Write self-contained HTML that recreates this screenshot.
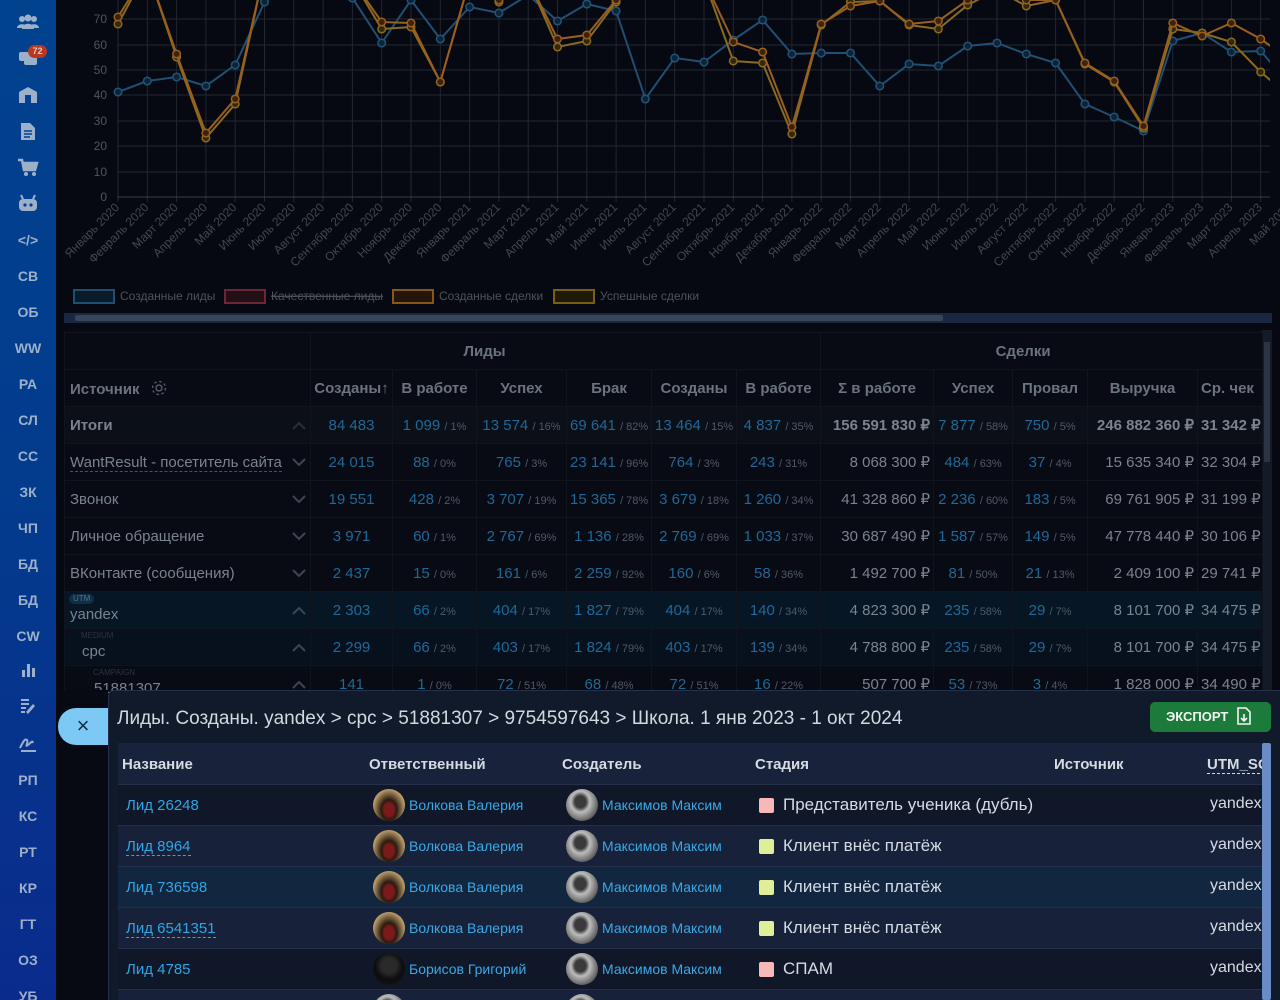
<!DOCTYPE html>
<html><head><meta charset="utf-8"><style>
*{box-sizing:border-box;margin:0;padding:0}
html,body{width:1280px;height:1000px;overflow:hidden}
body{background:#060912;font-family:"Liberation Sans","Noto Sans CJK SC",sans-serif;position:relative}
.sb{position:absolute;left:0;top:0;width:56px;height:1000px;background:linear-gradient(#01428f,#033b8d 50%,#0a2b8c)}
.sb div{position:absolute;left:0;width:56px;text-align:center;color:#9db0c9;font-weight:bold;font-size:14px;line-height:20px}
.badge{position:absolute;left:28px;top:45px;width:19px;height:13px;border-radius:7px;background:#b8391e;color:#e8c8c0;font-size:9px;font-weight:bold;text-align:center;line-height:13px}
table.m{position:absolute;left:64px;top:332px;border-collapse:collapse;table-layout:fixed;width:1198px;font-size:15px;color:#7a838e}
table.m td{height:37px;border:1px solid #10141c;text-align:center;white-space:nowrap;overflow:hidden;padding:0 3px}
.b{color:#1f6898}.p{font-size:11px;color:#4f5a66}
.r{text-align:right!important}
.hd td{color:#6a737e;font-weight:bold}
.tot td{background:#0b0f18}
.row td{background:#080b13}
.ya td{background:#061624}
.cp td{background:#07111d}
.chev{position:absolute;left:292px;width:14px;height:9px}
.clip{position:absolute;left:0;top:0;width:1280px;height:1000px;overflow:hidden}
.modal{position:absolute;left:108px;top:690px;width:1172px;height:310px;background:#111a2b;border-top:1px solid #263049;border-left:1px solid #263049;border-radius:6px 0 0 0}
.close{position:absolute;left:58px;top:708px;width:50px;height:37px;border-radius:18px 0 0 18px;background:#7cc9f6;color:#1c2c40;font-size:22px;text-align:center;line-height:36px}
.title{position:absolute;left:117px;top:708px;font-size:19px;color:#d2d8e0}
.exp{position:absolute;left:1150px;top:702px;width:121px;height:30px;border-radius:5px;background:#1c7a3a;color:#f2f6f2;font-weight:bold;font-size:13px;line-height:30px;padding-left:16px}
.it{position:absolute;left:118px;top:743px;width:1144px;height:257px;overflow:hidden}
.it .tr{position:relative;height:41px;border-bottom:1px solid #243049;font-size:15px}
.it .th{background:#18223a;height:42px;color:#d6dbe2;font-weight:bold}
.it span{position:absolute;top:12px;white-space:nowrap}
.lk{color:#2ea6e6;font-size:15px}
.dash{border-bottom:1px dashed #2ea6e6}
.nm{color:#3aa9e6;font-size:14px}
.av{position:absolute;top:4px;width:32px;height:32px;border-radius:50%}
.a1{background:radial-gradient(ellipse at 50% 65%,#7a1a1a 0 22%,#2a1a10 34%,#b89a68 70%)}
.a2{background:radial-gradient(ellipse at 45% 40%,#3a3a3a 0 22%,#bdbdbd 38%,#555 75%)}
.a3{background:radial-gradient(circle at 50% 40%,#2a2a2a 0 30%,#0d0d0d 55%,#161616)}
.sq{position:absolute;left:641px;top:13px;width:15px;height:15px;border-radius:2px}
.st{color:#d5dbe2;font-size:17px}
</style></head><body><div class="clip">
<div class="sb">
<div style="top:14px"><svg width="22" height="16" viewBox="0 0 22 16"><circle cx="5" cy="5" r="3" fill="#9db0c9"/><circle cx="11" cy="4" r="3.5" fill="#9db0c9"/><circle cx="17" cy="5" r="3" fill="#9db0c9"/><path d="M0 14c0-5 10-5 10 0zM5 15c0-7 12-7 12 0zM12 14c0-5 10-5 10 0z" fill="#9db0c9"/></svg></div>
<div style="top:50px"><svg width="20" height="18" viewBox="0 0 20 18"><rect x="1" y="2" width="13" height="9" rx="2" fill="#9db0c9"/><rect x="6" y="6" width="13" height="9" rx="2" fill="#9db0c9"/></svg></div>
<span class="badge">72</span>
<div style="top:86px"><svg width="20" height="18" viewBox="0 0 20 18"><path d="M1 6L10 1L19 6V17H1Z" fill="#9db0c9"/><rect x="7" y="9" width="6" height="8" fill="#03408e"/></svg></div>
<div style="top:122px"><svg width="16" height="19" viewBox="0 0 16 19"><path d="M1 1H10L15 6V18H1Z" fill="#9db0c9"/><path d="M4 9H12M4 12H12M4 15H10" stroke="#03408e" stroke-width="1.5"/></svg></div>
<div style="top:158px"><svg width="22" height="20" viewBox="0 0 22 20"><path d="M1 2H5L7 12H18L20 5H6" fill="none" stroke="#9db0c9" stroke-width="2.5"/><rect x="7" y="5" width="12" height="6" fill="#9db0c9"/><circle cx="9" cy="16" r="2" fill="#9db0c9"/><circle cx="17" cy="16" r="2" fill="#9db0c9"/></svg></div>
<div style="top:194px"><svg width="20" height="18" viewBox="0 0 20 18"><rect x="1" y="5" width="18" height="12" rx="4" fill="#9db0c9"/><circle cx="7" cy="11" r="1.6" fill="#03408e"/><circle cx="13" cy="11" r="1.6" fill="#03408e"/><path d="M5 5L3 1M15 5L17 1" stroke="#9db0c9" stroke-width="2"/></svg></div>
<div style="top:230px">&lt;/&gt;</div>
<div style="top:266px">СВ</div><div style="top:302px">ОБ</div><div style="top:338px">WW</div><div style="top:374px">РА</div><div style="top:410px">СЛ</div><div style="top:446px">СС</div><div style="top:482px">ЗК</div><div style="top:518px">ЧП</div><div style="top:554px">БД</div><div style="top:590px">БД</div><div style="top:626px">CW</div>
<div style="top:662px"><svg width="16" height="16" viewBox="0 0 16 16"><rect x="2" y="8" width="3" height="7" fill="#9db0c9"/><rect x="7" y="2" width="3" height="13" fill="#9db0c9"/><rect x="12" y="6" width="3" height="9" fill="#9db0c9"/></svg></div>
<div style="top:698px"><svg width="18" height="18" viewBox="0 0 18 18"><path d="M2 2H10M2 6H10M2 10H7M2 14H6" stroke="#9db0c9" stroke-width="2"/><path d="M9 16L16 8L14 6L7 14Z" fill="#9db0c9"/></svg></div>
<div style="top:734px"><svg width="18" height="18" viewBox="0 0 18 18"><path d="M1 14C4 8 6 4 8 6S5 14 9 11S13 6 14 9M2 17H17" stroke="#9db0c9" stroke-width="2" fill="none"/></svg></div>
<div style="top:770px">РП</div><div style="top:806px">КС</div><div style="top:842px">РТ</div><div style="top:878px">КР</div><div style="top:914px">ГТ</div><div style="top:950px">ОЗ</div><div style="top:986px">УБ</div>
</div>

<svg style="position:absolute;left:56px;top:0" width="1224" height="330" viewBox="56 0 1224 330">
<defs>
<marker id="mb" markerWidth="10" markerHeight="10" refX="5" refY="5" markerUnits="userSpaceOnUse"><circle cx="5" cy="5" r="3.8" fill="#0e2436" stroke="#1f5478" stroke-width="1.5"/></marker>
<marker id="mo" markerWidth="10" markerHeight="10" refX="5" refY="5" markerUnits="userSpaceOnUse"><circle cx="5" cy="5" r="3.8" fill="#3a240e" stroke="#9a5e1e" stroke-width="1.5"/></marker>
<marker id="mg" markerWidth="10" markerHeight="10" refX="5" refY="5" markerUnits="userSpaceOnUse"><circle cx="5" cy="5" r="3.8" fill="#32280e" stroke="#8a6a1e" stroke-width="1.5"/></marker>
<clipPath id="cp"><rect x="56" y="0" width="1214" height="200"/></clipPath>
</defs>
<g stroke="#23262e" stroke-width="1">
<path d="M117 19H1270M117 45H1270M117 70H1270M117 95H1270M117 121H1270M117 146H1270M117 172H1270"/>
<path d="M118 0V202M147.3 0V202M176.6 0V202M205.9 0V202M235.2 0V202M264.5 0V202M293.8 0V202M323.1 0V202M352.4 0V202M381.7 0V202M411 0V202M440.3 0V202M469.6 0V202M498.9 0V202M528.2 0V202M557.5 0V202M586.8 0V202M616.1 0V202M645.4 0V202M674.7 0V202M704 0V202M733.3 0V202M762.6 0V202M791.9 0V202M821.2 0V202M850.5 0V202M879.8 0V202M909.1 0V202M938.4 0V202M967.7 0V202M997 0V202M1026.3 0V202M1055.6 0V202M1084.9 0V202M1114.2 0V202M1143.5 0V202M1172.8 0V202M1202.1 0V202M1231.4 0V202M1260.7 0V202"/>
</g>
<path d="M117 197H1270" stroke="#3a3d46"/>
<g fill="#50545c" font-size="12" text-anchor="end" font-family="Liberation Sans">
<text x="107" y="23">70</text><text x="107" y="49">60</text><text x="107" y="74">50</text><text x="107" y="99">40</text><text x="107" y="125">30</text><text x="107" y="150">20</text><text x="107" y="176">10</text><text x="107" y="201">0</text>
</g>
<g clip-path="url(#cp)" fill="none" stroke-width="2">
<polyline stroke="#1f4f72" marker-start="url(#mb)" marker-mid="url(#mb)" points="118,92 147.3,81 176.6,77 205.9,86 235.2,65 264.5,2 293.8,-30 323.1,-30 352.4,-2 381.7,43 411,0 440.3,39 469.6,7 498.9,13 528.2,-5 557.5,21 586.8,4 616.1,11 645.4,99 674.7,58 704,62 733.3,40 762.6,20 791.9,54 821.2,53 850.5,53 879.8,86 909.1,64 938.4,66 967.7,46 997,43 1026.3,54 1055.6,63 1084.9,104 1114.2,117 1143.5,131 1172.8,41 1202.1,33 1231.4,52 1260.7,51 1290,85"/>
<polyline stroke="#8a6a1e" marker-start="url(#mg)" marker-mid="url(#mg)" points="118,24 147.3,-30 176.6,57 205.9,138 235.2,104 264.5,-30 293.8,-40 323.1,-40 352.4,-20 381.7,29 411,27 440.3,82 469.6,-20 498.9,2 528.2,-20 557.5,47 586.8,41 616.1,2 645.4,-30 674.7,-30 704,-20 733.3,61 762.6,63 791.9,134 821.2,25 850.5,2 879.8,1 909.1,25 938.4,29 967.7,5 997,-10 1026.3,6 1055.6,0 1084.9,64 1114.2,82 1143.5,128 1172.8,29 1202.1,33 1231.4,42 1260.7,72 1290,97"/>
<polyline stroke="#9a5e1e" marker-start="url(#mo)" marker-mid="url(#mo)" points="118,17 147.3,-30 176.6,54 205.9,133 235.2,99 264.5,-30 293.8,-40 323.1,-40 352.4,-20 381.7,22 411,23 440.3,82 469.6,-20 498.9,0 528.2,-20 557.5,39 586.8,35 616.1,0 645.4,-30 674.7,-30 704,-20 733.3,42 762.6,52 791.9,127 821.2,24 850.5,6 879.8,1 909.1,24 938.4,21 967.7,0 997,-10 1026.3,0 1055.6,0 1084.9,63 1114.2,81 1143.5,126 1172.8,23 1202.1,36 1231.4,23 1260.7,39 1290,60"/>
</g>
<g fill="#44474f" font-size="12" text-anchor="end" font-family="Liberation Sans">
<text transform="translate(120,208) rotate(-45)">Январь 2020</text><text transform="translate(149.3,208) rotate(-45)">Февраль 2020</text><text transform="translate(178.6,208) rotate(-45)">Март 2020</text><text transform="translate(207.9,208) rotate(-45)">Апрель 2020</text><text transform="translate(237.2,208) rotate(-45)">Май 2020</text><text transform="translate(266.5,208) rotate(-45)">Июнь 2020</text><text transform="translate(295.8,208) rotate(-45)">Июль 2020</text><text transform="translate(325.1,208) rotate(-45)">Август 2020</text><text transform="translate(354.4,208) rotate(-45)">Сентябрь 2020</text><text transform="translate(383.7,208) rotate(-45)">Октябрь 2020</text><text transform="translate(413,208) rotate(-45)">Ноябрь 2020</text><text transform="translate(442.3,208) rotate(-45)">Декабрь 2020</text><text transform="translate(471.6,208) rotate(-45)">Январь 2021</text><text transform="translate(500.9,208) rotate(-45)">Февраль 2021</text><text transform="translate(530.2,208) rotate(-45)">Март 2021</text><text transform="translate(559.5,208) rotate(-45)">Апрель 2021</text><text transform="translate(588.8,208) rotate(-45)">Май 2021</text><text transform="translate(618.1,208) rotate(-45)">Июнь 2021</text><text transform="translate(647.4,208) rotate(-45)">Июль 2021</text><text transform="translate(676.7,208) rotate(-45)">Август 2021</text><text transform="translate(706,208) rotate(-45)">Сентябрь 2021</text><text transform="translate(735.3,208) rotate(-45)">Октябрь 2021</text><text transform="translate(764.6,208) rotate(-45)">Ноябрь 2021</text><text transform="translate(793.9,208) rotate(-45)">Декабрь 2021</text><text transform="translate(823.2,208) rotate(-45)">Январь 2022</text><text transform="translate(852.5,208) rotate(-45)">Февраль 2022</text><text transform="translate(881.8,208) rotate(-45)">Март 2022</text><text transform="translate(911.1,208) rotate(-45)">Апрель 2022</text><text transform="translate(940.4,208) rotate(-45)">Май 2022</text><text transform="translate(969.7,208) rotate(-45)">Июнь 2022</text><text transform="translate(999,208) rotate(-45)">Июль 2022</text><text transform="translate(1028.3,208) rotate(-45)">Август 2022</text><text transform="translate(1057.6,208) rotate(-45)">Сентябрь 2022</text><text transform="translate(1086.9,208) rotate(-45)">Октябрь 2022</text><text transform="translate(1116.2,208) rotate(-45)">Ноябрь 2022</text><text transform="translate(1145.5,208) rotate(-45)">Декабрь 2022</text><text transform="translate(1174.8,208) rotate(-45)">Январь 2023</text><text transform="translate(1204.1,208) rotate(-45)">Февраль 2023</text><text transform="translate(1233.4,208) rotate(-45)">Март 2023</text><text transform="translate(1262.7,208) rotate(-45)">Апрель 2023</text><text transform="translate(1292,208) rotate(-45)">Май 2023</text>
</g>
<g font-size="12" font-family="Liberation Sans" fill="#4e525a">
<rect x="74" y="290" width="40" height="13" fill="#0c1b2a" stroke="#1f4f72" stroke-width="2"/><text x="120" y="300">Созданные лиды</text>
<rect x="225" y="290" width="40" height="13" fill="#221018" stroke="#6e2535" stroke-width="2"/><text x="271" y="300" text-decoration="line-through">Качественные лиды</text>
<rect x="393" y="290" width="40" height="13" fill="#231608" stroke="#8a5518" stroke-width="2"/><text x="439" y="300">Созданные сделки</text>
<rect x="554" y="290" width="40" height="13" fill="#1f1a08" stroke="#7a5e18" stroke-width="2"/><text x="600" y="300">Успешные сделки</text>
</g>
<rect x="64" y="313" width="1208" height="10" fill="#1a2740"/>
<rect x="75" y="315" width="868" height="6" rx="2" fill="#38465a"/>
</svg>

<div style="position:absolute;left:64px;top:330px;width:1208px;height:360px;background:#080b13;overflow:hidden">
<div style="position:absolute;right:0;top:0;width:10px;height:360px;background:#141a26"><div style="position:absolute;left:2px;top:12px;width:6px;height:120px;background:#2b3442"></div></div>
</div>
<table class="m">
<colgroup><col style="width:246px"><col style="width:82px"><col style="width:84px"><col style="width:90px"><col style="width:85px"><col style="width:85px"><col style="width:84px"><col style="width:113px"><col style="width:79px"><col style="width:75px"><col style="width:110px"><col style="width:65px"></colgroup>
<tr class="hd" style="background:#080b13"><td></td><td colspan="6" style="padding-right:165px">Лиды</td><td colspan="5" style="padding-right:40px">Сделки</td></tr>
<tr class="hd" style="background:#080b13"><td style="text-align:left;padding-left:5px">Источник <svg width="18" height="18" viewBox="0 0 18 18" style="vertical-align:-3px;margin-left:6px"><circle cx="9" cy="9" r="3" fill="none" stroke="#5a636e" stroke-width="1.3"/><circle cx="9" cy="9" r="6.5" fill="none" stroke="#5a636e" stroke-width="1.3" stroke-dasharray="2.5 2.6"/></svg></td><td>Созданы↑</td><td>В работе</td><td>Успех</td><td>Брак</td><td>Созданы</td><td>В работе</td><td>Σ в работе</td><td>Успех</td><td>Провал</td><td>Выручка</td><td style="text-align:left">Ср. чек</td></tr>
<tr class="tot"><td style="text-align:left;padding-left:5px;font-weight:bold">Итоги</td><td class="b">84 483</td><td><span class="b">1 099</span> <span class="p">/ 1%</span></td><td><span class="b">13 574</span> <span class="p">/ 16%</span></td><td><span class="b">69 641</span> <span class="p">/ 82%</span></td><td><span class="b">13 464</span> <span class="p">/ 15%</span></td><td><span class="b">4 837</span> <span class="p">/ 35%</span></td><td class="r" style="font-weight:bold">156 591 830 ₽</td><td><span class="b">7 877</span> <span class="p">/ 58%</span></td><td><span class="b">750</span> <span class="p">/ 5%</span></td><td class="r" style="font-weight:bold">246 882 360 ₽</td><td style="text-align:left;font-weight:bold">31 342 ₽</td></tr>
<tr class="row"><td style="text-align:left;padding-left:5px"><span style="border-bottom:1px dashed #4a525c">WantResult - посетитель сайта</span></td><td class="b">24 015</td><td><span class="b">88</span> <span class="p">/ 0%</span></td><td><span class="b">765</span> <span class="p">/ 3%</span></td><td><span class="b">23 141</span> <span class="p">/ 96%</span></td><td><span class="b">764</span> <span class="p">/ 3%</span></td><td><span class="b">243</span> <span class="p">/ 31%</span></td><td class="r">8 068 300 ₽</td><td><span class="b">484</span> <span class="p">/ 63%</span></td><td><span class="b">37</span> <span class="p">/ 4%</span></td><td class="r">15 635 340 ₽</td><td style="text-align:left">32 304 ₽</td></tr>
<tr class="row"><td style="text-align:left;padding-left:5px">Звонок</td><td class="b">19 551</td><td><span class="b">428</span> <span class="p">/ 2%</span></td><td><span class="b">3 707</span> <span class="p">/ 19%</span></td><td><span class="b">15 365</span> <span class="p">/ 78%</span></td><td><span class="b">3 679</span> <span class="p">/ 18%</span></td><td><span class="b">1 260</span> <span class="p">/ 34%</span></td><td class="r">41 328 860 ₽</td><td><span class="b">2 236</span> <span class="p">/ 60%</span></td><td><span class="b">183</span> <span class="p">/ 5%</span></td><td class="r">69 761 905 ₽</td><td style="text-align:left">31 199 ₽</td></tr>
<tr class="row"><td style="text-align:left;padding-left:5px">Личное обращение</td><td class="b">3 971</td><td><span class="b">60</span> <span class="p">/ 1%</span></td><td><span class="b">2 767</span> <span class="p">/ 69%</span></td><td><span class="b">1 136</span> <span class="p">/ 28%</span></td><td><span class="b">2 769</span> <span class="p">/ 69%</span></td><td><span class="b">1 033</span> <span class="p">/ 37%</span></td><td class="r">30 687 490 ₽</td><td><span class="b">1 587</span> <span class="p">/ 57%</span></td><td><span class="b">149</span> <span class="p">/ 5%</span></td><td class="r">47 778 440 ₽</td><td style="text-align:left">30 106 ₽</td></tr>
<tr class="row"><td style="text-align:left;padding-left:5px">ВКонтакте (сообщения)</td><td class="b">2 437</td><td><span class="b">15</span> <span class="p">/ 0%</span></td><td><span class="b">161</span> <span class="p">/ 6%</span></td><td><span class="b">2 259</span> <span class="p">/ 92%</span></td><td><span class="b">160</span> <span class="p">/ 6%</span></td><td><span class="b">58</span> <span class="p">/ 36%</span></td><td class="r">1 492 700 ₽</td><td><span class="b">81</span> <span class="p">/ 50%</span></td><td><span class="b">21</span> <span class="p">/ 13%</span></td><td class="r">2 409 100 ₽</td><td style="text-align:left">29 741 ₽</td></tr>
<tr class="ya"><td style="text-align:left;padding-left:5px;padding-top:8px">yandex</td><td class="b">2 303</td><td><span class="b">66</span> <span class="p">/ 2%</span></td><td><span class="b">404</span> <span class="p">/ 17%</span></td><td><span class="b">1 827</span> <span class="p">/ 79%</span></td><td><span class="b">404</span> <span class="p">/ 17%</span></td><td><span class="b">140</span> <span class="p">/ 34%</span></td><td class="r">4 823 300 ₽</td><td><span class="b">235</span> <span class="p">/ 58%</span></td><td><span class="b">29</span> <span class="p">/ 7%</span></td><td class="r">8 101 700 ₽</td><td style="text-align:left">34 475 ₽</td></tr>
<tr class="cp"><td style="text-align:left;padding-left:17px;padding-top:8px">cpc</td><td class="b">2 299</td><td><span class="b">66</span> <span class="p">/ 2%</span></td><td><span class="b">403</span> <span class="p">/ 17%</span></td><td><span class="b">1 824</span> <span class="p">/ 79%</span></td><td><span class="b">403</span> <span class="p">/ 17%</span></td><td><span class="b">139</span> <span class="p">/ 34%</span></td><td class="r">4 788 800 ₽</td><td><span class="b">235</span> <span class="p">/ 58%</span></td><td><span class="b">29</span> <span class="p">/ 7%</span></td><td class="r">8 101 700 ₽</td><td style="text-align:left">34 475 ₽</td></tr>
<tr class="row"><td style="text-align:left;padding-left:29px;padding-top:8px">51881307</td><td class="b">141</td><td><span class="b">1</span> <span class="p">/ 0%</span></td><td><span class="b">72</span> <span class="p">/ 51%</span></td><td><span class="b">68</span> <span class="p">/ 48%</span></td><td><span class="b">72</span> <span class="p">/ 51%</span></td><td><span class="b">16</span> <span class="p">/ 22%</span></td><td class="r">507 700 ₽</td><td><span class="b">53</span> <span class="p">/ 73%</span></td><td><span class="b">3</span> <span class="p">/ 4%</span></td><td class="r">1 828 000 ₽</td><td style="text-align:left">34 490 ₽</td></tr>
</table>
<div style="position:absolute;left:69px;top:594px;font-size:8px;color:#5a7080;background:#0d3048;border-radius:5px;padding:0 4px;line-height:10px">UTM</div>
<div style="position:absolute;left:81px;top:631px;font-size:8px;color:#2a3440">MEDIUM</div>
<div style="position:absolute;left:93px;top:668px;font-size:8px;color:#2a3440">CAMPAIGN</div>
<svg class="chev" style="top:421px" viewBox="0 0 14 9"><path d="M1 8L7 2L13 8" fill="none" stroke="#2a3038" stroke-width="2"/></svg>
<svg class="chev" style="top:458px" viewBox="0 0 14 9"><path d="M1 1L7 7L13 1" fill="none" stroke="#3e4650" stroke-width="2"/></svg>
<svg class="chev" style="top:495px" viewBox="0 0 14 9"><path d="M1 1L7 7L13 1" fill="none" stroke="#3e4650" stroke-width="2"/></svg>
<svg class="chev" style="top:532px" viewBox="0 0 14 9"><path d="M1 1L7 7L13 1" fill="none" stroke="#3e4650" stroke-width="2"/></svg>
<svg class="chev" style="top:569px" viewBox="0 0 14 9"><path d="M1 1L7 7L13 1" fill="none" stroke="#3e4650" stroke-width="2"/></svg>
<svg class="chev" style="top:606px" viewBox="0 0 14 9"><path d="M1 8L7 2L13 8" fill="none" stroke="#3e4650" stroke-width="2"/></svg>
<svg class="chev" style="top:643px" viewBox="0 0 14 9"><path d="M1 8L7 2L13 8" fill="none" stroke="#3e4650" stroke-width="2"/></svg>
<svg class="chev" style="top:680px" viewBox="0 0 14 9"><path d="M1 8L7 2L13 8" fill="none" stroke="#3e4650" stroke-width="2"/></svg>

<div style="position:absolute;left:56px;top:690px;width:52px;height:310px;background:#070a12"></div>
<div class="modal"></div>
<div class="close">×</div>
<div class="title">Лиды. Созданы. yandex &gt; cpc &gt; 51881307 &gt; 9754597643 &gt; Школа. 1 янв 2023 - 1 окт 2024</div>
<div class="exp">ЭКСПОРТ <svg width="16" height="18" viewBox="0 0 16 18" style="vertical-align:-4px;margin-left:4px"><path d="M2 1H10L14 5V17H2Z" fill="none" stroke="#f2f6f2" stroke-width="1.6"/><path d="M8 7V14M5 11L8 14L11 11" fill="none" stroke="#f2f6f2" stroke-width="1.6"/></svg></div>
<div class="it">
<div class="tr th"><span style="left:4px;top:13px">Название</span><span style="left:251px;top:13px">Ответственный</span><span style="left:444px;top:13px">Создатель</span><span style="left:637px;top:13px">Стадия</span><span style="left:936px;top:13px">Источник</span><span style="left:1089px;top:13px;border-bottom:1px dashed #d6dbe2">UTM_SO</span></div>
<div class="tr" style="background:#0f1729"><span class="lk" style="left:8px">Лид 26248</span><div class="av a1" style="left:255px"></div><span class="nm" style="left:291px">Волкова Валерия</span><div class="av a2" style="left:448px"></div><span class="nm" style="left:484px">Максимов Максим</span><div class="sq" style="background:#f8b8b8"></div><span class="st" style="left:665px;top:10px">Представитель ученика (дубль)</span><span class="st" style="left:1092px;top:10px;font-size:16px">yandex</span></div>
<div class="tr" style="background:#17213a"><span class="lk dash" style="left:8px">Лид 8964</span><div class="av a1" style="left:255px"></div><span class="nm" style="left:291px">Волкова Валерия</span><div class="av a2" style="left:448px"></div><span class="nm" style="left:484px">Максимов Максим</span><div class="sq" style="background:#e0ee98"></div><span class="st" style="left:665px;top:10px">Клиент внёс платёж</span><span class="st" style="left:1092px;top:10px;font-size:16px">yandex</span></div>
<div class="tr" style="background:#13263f"><span class="lk" style="left:8px">Лид 736598</span><div class="av a1" style="left:255px"></div><span class="nm" style="left:291px">Волкова Валерия</span><div class="av a2" style="left:448px"></div><span class="nm" style="left:484px">Максимов Максим</span><div class="sq" style="background:#e0ee98"></div><span class="st" style="left:665px;top:10px">Клиент внёс платёж</span><span class="st" style="left:1092px;top:10px;font-size:16px">yandex</span></div>
<div class="tr" style="background:#17213a"><span class="lk dash" style="left:8px">Лид 6541351</span><div class="av a1" style="left:255px"></div><span class="nm" style="left:291px">Волкова Валерия</span><div class="av a2" style="left:448px"></div><span class="nm" style="left:484px">Максимов Максим</span><div class="sq" style="background:#e0ee98"></div><span class="st" style="left:665px;top:10px">Клиент внёс платёж</span><span class="st" style="left:1092px;top:10px;font-size:16px">yandex</span></div>
<div class="tr" style="background:#0f1729"><span class="lk" style="left:8px">Лид 4785</span><div class="av a3" style="left:255px"></div><span class="nm" style="left:291px">Борисов Григорий</span><div class="av a2" style="left:448px"></div><span class="nm" style="left:484px">Максимов Максим</span><div class="sq" style="background:#f8b8b8"></div><span class="st" style="left:665px;top:10px">СПАМ</span><span class="st" style="left:1092px;top:10px;font-size:16px">yandex</span></div>
<div class="tr" style="background:#17213a"><div class="av a2" style="left:255px"></div><div class="av a2" style="left:448px"></div></div>
</div>
<div style="position:absolute;left:1262px;top:743px;width:9px;height:257px;background:#6a8cc4;border-radius:2px"></div>
</div></body></html>
